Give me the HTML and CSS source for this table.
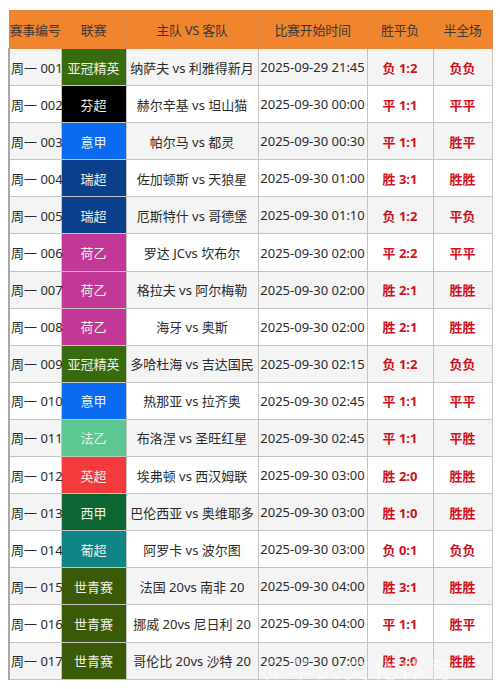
FILE: index.html
```html
<!DOCTYPE html>
<html lang="zh">
<head>
<meta charset="utf-8">
<link rel="stylesheet" href="styles.css">
</head>
<body>
<div class="wrap">
<table class="tbl">
  <colgroup>
    <col class="c1"><col class="c2"><col class="c3"><col class="c4"><col class="c5"><col class="c6">
  </colgroup>
  <thead>
    <tr><th>赛事编号</th><th>联赛</th><th>主队 VS 客队</th><th>比赛开始时间</th><th>胜平负</th><th>半全场</th></tr>
  </thead>
  <tbody>
    <tr><td class="id">周一 001</td><td class="lg acl">亚冠精英</td><td>纳萨夫 vs 利雅得新月</td><td>2025-09-29 21:45</td><td class="r">负 1:2</td><td class="r">负负</td></tr>
    <tr><td class="id">周一 002</td><td class="lg fin">芬超</td><td>赫尔辛基 vs 坦山猫</td><td>2025-09-30 00:00</td><td class="r">平 1:1</td><td class="r">平平</td></tr>
    <tr><td class="id">周一 003</td><td class="lg ita">意甲</td><td>帕尔马 vs 都灵</td><td>2025-09-30 00:30</td><td class="r">平 1:1</td><td class="r">胜平</td></tr>
    <tr><td class="id">周一 004</td><td class="lg swe">瑞超</td><td>佐加顿斯 vs 天狼星</td><td>2025-09-30 01:00</td><td class="r">胜 3:1</td><td class="r">胜胜</td></tr>
    <tr><td class="id">周一 005</td><td class="lg swe">瑞超</td><td>厄斯特什 vs 哥德堡</td><td>2025-09-30 01:10</td><td class="r">负 1:2</td><td class="r">平负</td></tr>
    <tr><td class="id">周一 006</td><td class="lg ned">荷乙</td><td>罗达 JCvs 坎布尔</td><td>2025-09-30 02:00</td><td class="r">平 2:2</td><td class="r">平平</td></tr>
    <tr><td class="id">周一 007</td><td class="lg ned">荷乙</td><td>格拉夫 vs 阿尔梅勒</td><td>2025-09-30 02:00</td><td class="r">胜 2:1</td><td class="r">胜胜</td></tr>
    <tr><td class="id">周一 008</td><td class="lg ned">荷乙</td><td>海牙 vs 奥斯</td><td>2025-09-30 02:00</td><td class="r">胜 2:1</td><td class="r">胜胜</td></tr>
    <tr><td class="id">周一 009</td><td class="lg acl">亚冠精英</td><td>多哈杜海 vs 吉达国民</td><td>2025-09-30 02:15</td><td class="r">负 1:2</td><td class="r">负负</td></tr>
    <tr><td class="id">周一 010</td><td class="lg ita">意甲</td><td>热那亚 vs 拉齐奥</td><td>2025-09-30 02:45</td><td class="r">平 1:1</td><td class="r">平平</td></tr>
    <tr><td class="id">周一 011</td><td class="lg fra">法乙</td><td>布洛涅 vs 圣旺红星</td><td>2025-09-30 02:45</td><td class="r">平 1:1</td><td class="r">平胜</td></tr>
    <tr><td class="id">周一 012</td><td class="lg eng">英超</td><td>埃弗顿 vs 西汉姆联</td><td>2025-09-30 03:00</td><td class="r">胜 2:0</td><td class="r">胜胜</td></tr>
    <tr><td class="id">周一 013</td><td class="lg esp">西甲</td><td>巴伦西亚 vs 奥维耶多</td><td>2025-09-30 03:00</td><td class="r">胜 1:0</td><td class="r">胜胜</td></tr>
    <tr><td class="id">周一 014</td><td class="lg por">葡超</td><td>阿罗卡 vs 波尔图</td><td>2025-09-30 03:00</td><td class="r">负 0:1</td><td class="r">负负</td></tr>
    <tr><td class="id">周一 015</td><td class="lg wyc">世青赛</td><td>法国 20vs 南非 20</td><td>2025-09-30 04:00</td><td class="r">胜 3:1</td><td class="r">胜胜</td></tr>
    <tr><td class="id">周一 016</td><td class="lg wyc">世青赛</td><td>挪威 20vs 尼日利 20</td><td>2025-09-30 04:00</td><td class="r">平 1:1</td><td class="r">胜平</td></tr>
    <tr><td class="id">周一 017</td><td class="lg wyc">世青赛</td><td>哥伦比 20vs 沙特 20</td><td>2025-09-30 07:00</td><td class="r">胜 3:0</td><td class="r">胜胜</td></tr>
  </tbody>
</table>
<div class="mark">@华人文化体育</div>
</div>
</body>
</html>
```

FILE: styles.css
```css
html, body {
  margin: 0;
  padding: 0;
  background: #ffffff;
}
.wrap {
  position: relative;
  padding: 10px 0 0 8px;
  width: 483px;
}
.tbl {
  border-collapse: collapse;
  table-layout: fixed;
  width: 483px;
  font-family: "Noto Sans", "Noto Sans CJK SC", sans-serif;
  font-size: 13px;
  color: #2b2b2b;
}
.c1 { width: 52px; }
.c2 { width: 65px; }
.c3 { width: 132px; }
.c4 { width: 109px; }
.c5 { width: 66px; }
.c6 { width: 59px; }
.tbl th {
  background: #f0852d;
  color: #3a3a3a;
  font-weight: normal;
  height: 37px;
  border: 1px solid #e8873a;
  border-right-color: #d9884a;
  padding: 0;
  white-space: nowrap;
  letter-spacing: -0.3px;
}
.tbl td {
  height: 36.1px;
  border: 1px solid #c4c4c4;
  text-align: center;
  padding: 0;
  white-space: nowrap;
}
.tbl td:first-child {
  border-left: 2px solid #a8a8a8;
}
.tbl tbody tr:nth-child(odd) td {
  background: #f4f4f4;
}
.tbl tbody tr:nth-child(even) td {
  background: #ffffff;
}
.tbl td.id {
  text-align: left;
  padding-left: 1px;
}
.tbl td.r {
  color: #d0121c;
  font-weight: bold;
}
.tbl td.lg {
  color: #eef2e6;
}
.tbl tbody tr td.acl { background: #386b10; }
.tbl tbody tr td.fin { background: #000000; }
.tbl tbody tr td.ita { background: #0b6af2; }
.tbl tbody tr td.swe { background: #0a3f8c; }
.tbl tbody tr td.ned { background: #c13896; }
.tbl tbody tr td.fra { background: #5dc791; }
.tbl tbody tr td.eng { background: #f43a3c; }
.tbl tbody tr td.esp { background: #0c6533; }
.tbl tbody tr td.por { background: #0f8486; }
.tbl tbody tr td.wyc { background: #3b5a08; }
.mark {
  position: absolute;
  left: 262px;
  top: 650px;
  font-family: "Noto Sans CJK SC", sans-serif;
  font-size: 24px;
  color: rgba(255, 255, 255, 0.5);
  white-space: nowrap;
  letter-spacing: 4px;
  pointer-events: none;
}
```
